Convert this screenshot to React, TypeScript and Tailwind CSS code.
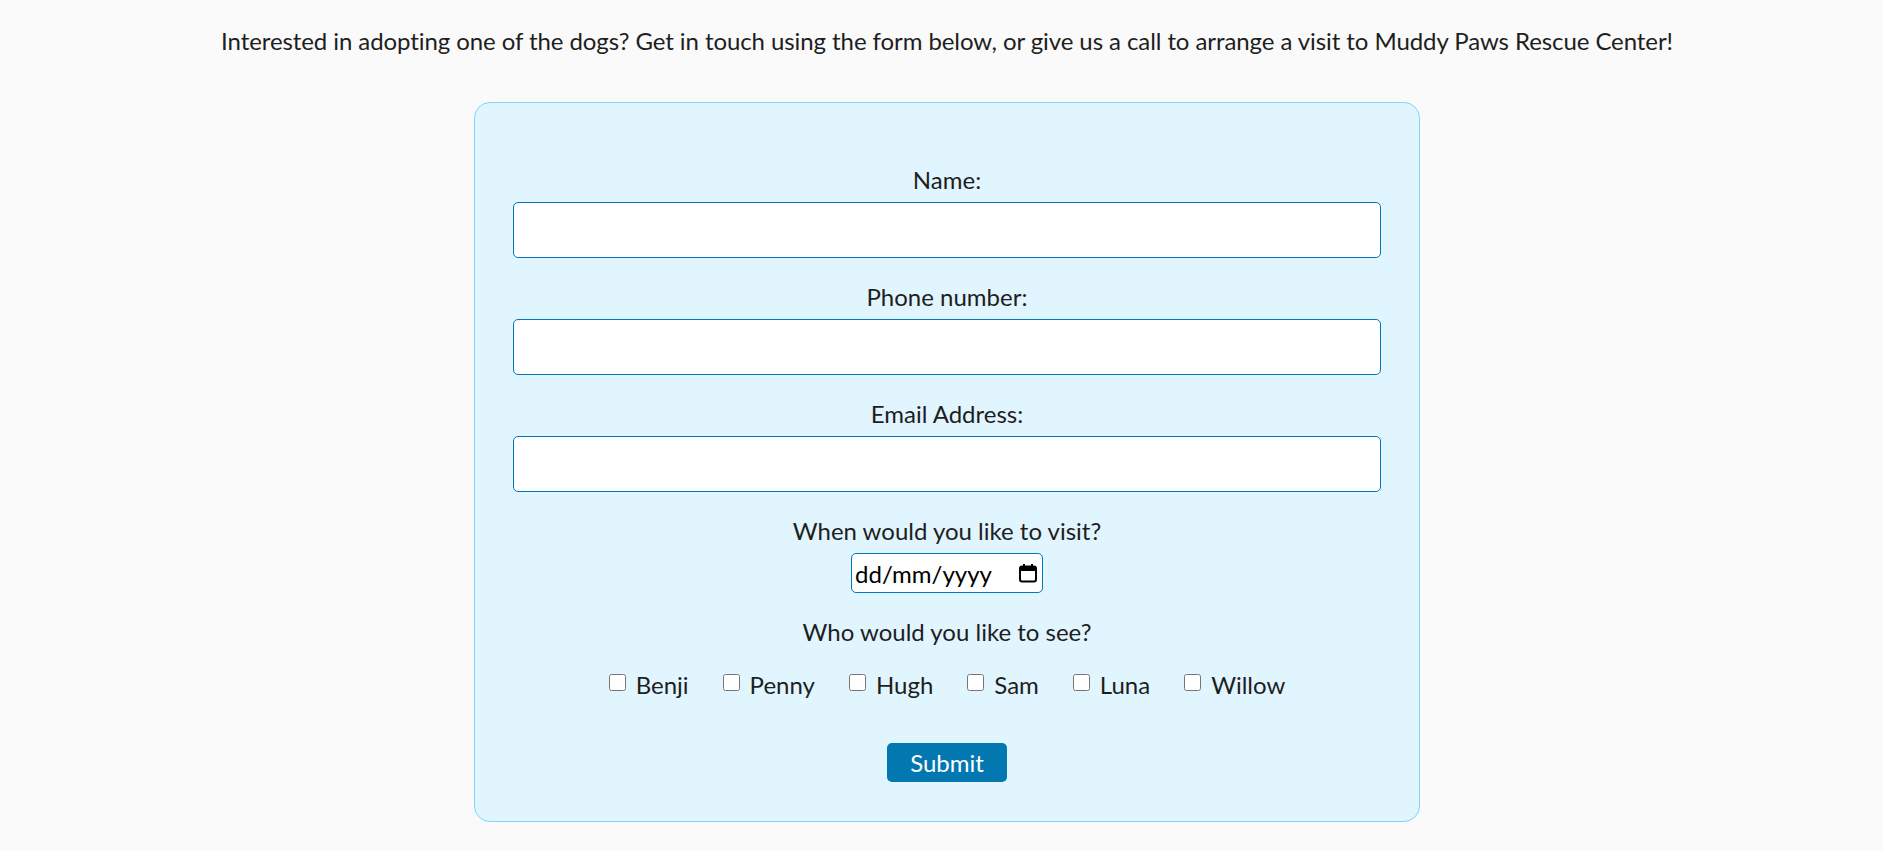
const DOGS = ["Benji", "Penny", "Hugh", "Sam", "Luna", "Willow"];

function Field({ label, type = "text" }: { label: string; type?: string }) {
  return (
    <div className="flex flex-col items-stretch mb-[22px]">
      <label className="text-center leading-[33px] mb-[6px]">{label}</label>
      <input
        type={type}
        className="h-[56px] w-full rounded-[5px] border border-[#0277bd] bg-white px-3 outline-none"
      />
    </div>
  );
}

function CalendarIcon() {
  return (
    <svg viewBox="0 0 20 20" className="h-[20px] w-[20px] shrink-0" fill="none">
      <rect x="2" y="3.5" width="16" height="15" rx="2" stroke="#000" strokeWidth="2" />
      <rect x="2" y="3.5" width="16" height="4.5" fill="#000" />
      <rect x="5" y="1" width="2" height="4" fill="#000" />
      <rect x="13" y="1" width="2" height="4" fill="#000" />
    </svg>
  );
}

export default function App() {
  return (
    <div className="min-h-screen bg-[#fafafa] pl-[11px] pt-[24px] pb-10 text-[24px] text-[#1e1e1e] font-['Lato',sans-serif]">
      <p className="text-center leading-[33px] tracking-[-0.08px]">
        Interested in adopting one of the dogs? Get in touch using the form below, or give us a call to arrange a visit to Muddy Paws Rescue Center!
      </p>

      <form className="mx-auto mt-[45px] w-[946px] rounded-2xl border border-[#81d4fa] bg-[#e1f5fe] px-[38px] pt-[60px] pb-[39px]">
        <Field label="Name:" />
        <Field label="Phone number:" type="tel" />
        <Field label="Email Address:" type="email" />

        <div className="flex flex-col items-center mb-[22px]">
          <label className="leading-[33px] mb-[6px]">When would you like to visit?</label>
          <div className="flex h-[40px] w-[192px] items-center rounded-[5px] border border-[#0277bd] bg-white pl-[3px] pr-[4px]">
            <input
              type="text"
              placeholder="dd/mm/yyyy"
              className="w-0 flex-1 bg-transparent text-[24px] leading-none text-black placeholder:text-black outline-none"
            />
            <CalendarIcon />
          </div>
        </div>

        <div className="flex flex-col items-center">
          <span className="leading-[33px]">Who would you like to see?</span>
          <div className="mt-[20px] flex items-center justify-center gap-[34px] leading-[33px]">
            {DOGS.map((d) => (
              <label key={d} className="flex items-center gap-[10px]">
                <input type="checkbox" className="mb-[4px] h-[17px] w-[17px]" />
                {d}
              </label>
            ))}
          </div>
        </div>

        <div className="mt-[42px] flex justify-center">
          <button
            type="button"
            className="h-[39px] w-[120px] rounded-[5px] bg-[#0277b0] text-white text-[24px] leading-none"
          >
            Submit
          </button>
        </div>
      </form>
    </div>
  );
}
